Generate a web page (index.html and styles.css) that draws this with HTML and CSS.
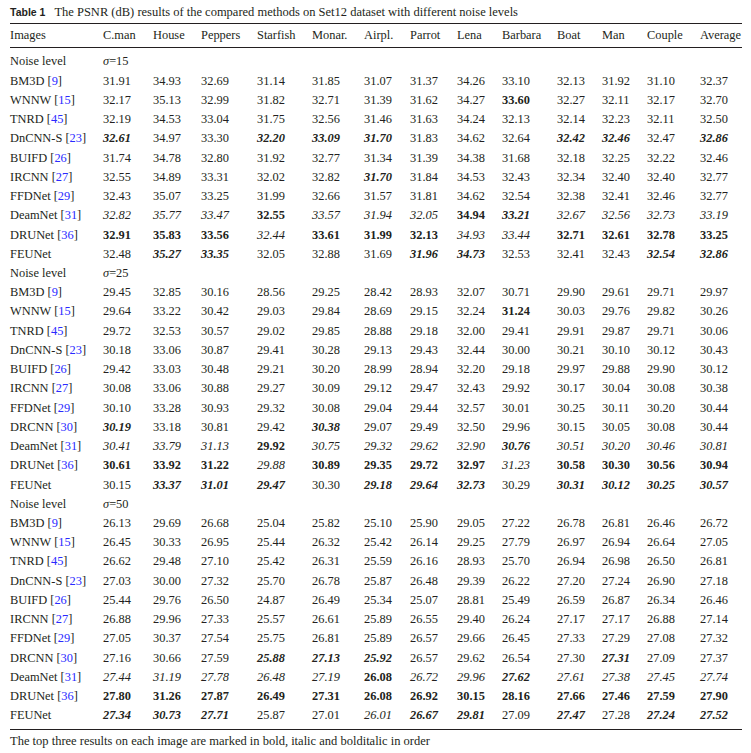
FILE: index.html
```html
<!DOCTYPE html>
<html>
<head>
<meta charset="utf-8">
<link rel="stylesheet" href="styles.css">
</head>
<body>
<div class="wrap">
  <div class="caption"><span class="label">Table 1</span><span class="ctext">The PSNR (dB) results of the compared methods on Set12 dataset with different noise levels</span></div>
  <table class="results">
    <colgroup>
      <col class="c-img"><col class="c-cman"><col class="c-house"><col class="c-pep"><col class="c-star"><col class="c-mon"><col class="c-air"><col class="c-par"><col class="c-lena"><col class="c-bar"><col class="c-boat"><col class="c-man"><col class="c-cou"><col class="c-avg">
    </colgroup>
    <thead>
      <tr><th>Images</th><th>C.man</th><th>House</th><th>Peppers</th><th>Starfish</th><th>Monar.</th><th>Airpl.</th><th>Parrot</th><th>Lena</th><th>Barbara</th><th>Boat</th><th>Man</th><th>Couple</th><th>Average</th></tr>
    </thead>
    <tbody>
      <tr class="first"><td>Noise level</td><td colspan="13"><i>σ</i>=15</td></tr>
      <tr><td>BM3D [<span class="ref">9</span>]</td><td>31.91</td><td>34.93</td><td>32.69</td><td>31.14</td><td>31.85</td><td>31.07</td><td>31.37</td><td>34.26</td><td>33.10</td><td>32.13</td><td>31.92</td><td>31.10</td><td>32.37</td></tr>
      <tr><td>WNNW [<span class="ref">15</span>]</td><td>32.17</td><td>35.13</td><td>32.99</td><td>31.82</td><td>32.71</td><td>31.39</td><td>31.62</td><td>34.27</td><td class="b">33.60</td><td>32.27</td><td>32.11</td><td>32.17</td><td>32.70</td></tr>
      <tr><td>TNRD [<span class="ref">45</span>]</td><td>32.19</td><td>34.53</td><td>33.04</td><td>31.75</td><td>32.56</td><td>31.46</td><td>31.63</td><td>34.24</td><td>32.13</td><td>32.14</td><td>32.23</td><td>32.11</td><td>32.50</td></tr>
      <tr><td>DnCNN-S [<span class="ref">23</span>]</td><td class="bi">32.61</td><td>34.97</td><td>33.30</td><td class="bi">32.20</td><td class="bi">33.09</td><td class="bi">31.70</td><td>31.83</td><td>34.62</td><td>32.64</td><td class="bi">32.42</td><td class="bi">32.46</td><td>32.47</td><td class="bi">32.86</td></tr>
      <tr><td>BUIFD [<span class="ref">26</span>]</td><td>31.74</td><td>34.78</td><td>32.80</td><td>31.92</td><td>32.77</td><td>31.34</td><td>31.39</td><td>34.38</td><td>31.68</td><td>32.18</td><td>32.25</td><td>32.22</td><td>32.46</td></tr>
      <tr><td>IRCNN [<span class="ref">27</span>]</td><td>32.55</td><td>34.89</td><td>33.31</td><td>32.02</td><td>32.82</td><td class="bi">31.70</td><td>31.84</td><td>34.53</td><td>32.43</td><td>32.34</td><td>32.40</td><td>32.40</td><td>32.77</td></tr>
      <tr><td>FFDNet [<span class="ref">29</span>]</td><td>32.43</td><td>35.07</td><td>33.25</td><td>31.99</td><td>32.66</td><td>31.57</td><td>31.81</td><td>34.62</td><td>32.54</td><td>32.38</td><td>32.41</td><td>32.46</td><td>32.77</td></tr>
      <tr><td>DeamNet [<span class="ref">31</span>]</td><td class="i">32.82</td><td class="i">35.77</td><td class="i">33.47</td><td class="b">32.55</td><td class="i">33.57</td><td class="i">31.94</td><td class="i">32.05</td><td class="b">34.94</td><td class="bi">33.21</td><td class="i">32.67</td><td class="i">32.56</td><td class="i">32.73</td><td class="i">33.19</td></tr>
      <tr><td>DRUNet [<span class="ref">36</span>]</td><td class="b">32.91</td><td class="b">35.83</td><td class="b">33.56</td><td class="i">32.44</td><td class="b">33.61</td><td class="b">31.99</td><td class="b">32.13</td><td class="i">34.93</td><td class="i">33.44</td><td class="b">32.71</td><td class="b">32.61</td><td class="b">32.78</td><td class="b">33.25</td></tr>
      <tr><td>FEUNet</td><td>32.48</td><td class="bi">35.27</td><td class="bi">33.35</td><td>32.05</td><td>32.88</td><td>31.69</td><td class="bi">31.96</td><td class="bi">34.73</td><td>32.53</td><td>32.41</td><td>32.43</td><td class="bi">32.54</td><td class="bi">32.86</td></tr>

      <tr><td>Noise level</td><td colspan="13"><i>σ</i>=25</td></tr>
      <tr><td>BM3D [<span class="ref">9</span>]</td><td>29.45</td><td>32.85</td><td>30.16</td><td>28.56</td><td>29.25</td><td>28.42</td><td>28.93</td><td>32.07</td><td>30.71</td><td>29.90</td><td>29.61</td><td>29.71</td><td>29.97</td></tr>
      <tr><td>WNNW [<span class="ref">15</span>]</td><td>29.64</td><td>33.22</td><td>30.42</td><td>29.03</td><td>29.84</td><td>28.69</td><td>29.15</td><td>32.24</td><td class="b">31.24</td><td>30.03</td><td>29.76</td><td>29.82</td><td>30.26</td></tr>
      <tr><td>TNRD [<span class="ref">45</span>]</td><td>29.72</td><td>32.53</td><td>30.57</td><td>29.02</td><td>29.85</td><td>28.88</td><td>29.18</td><td>32.00</td><td>29.41</td><td>29.91</td><td>29.87</td><td>29.71</td><td>30.06</td></tr>
      <tr><td>DnCNN-S [<span class="ref">23</span>]</td><td>30.18</td><td>33.06</td><td>30.87</td><td>29.41</td><td>30.28</td><td>29.13</td><td>29.43</td><td>32.44</td><td>30.00</td><td>30.21</td><td>30.10</td><td>30.12</td><td>30.43</td></tr>
      <tr><td>BUIFD [<span class="ref">26</span>]</td><td>29.42</td><td>33.03</td><td>30.48</td><td>29.21</td><td>30.20</td><td>28.99</td><td>28.94</td><td>32.20</td><td>29.18</td><td>29.97</td><td>29.88</td><td>29.90</td><td>30.12</td></tr>
      <tr><td>IRCNN [<span class="ref">27</span>]</td><td>30.08</td><td>33.06</td><td>30.88</td><td>29.27</td><td>30.09</td><td>29.12</td><td>29.47</td><td>32.43</td><td>29.92</td><td>30.17</td><td>30.04</td><td>30.08</td><td>30.38</td></tr>
      <tr><td>FFDNet [<span class="ref">29</span>]</td><td>30.10</td><td>33.28</td><td>30.93</td><td>29.32</td><td>30.08</td><td>29.04</td><td>29.44</td><td>32.57</td><td>30.01</td><td>30.25</td><td>30.11</td><td>30.20</td><td>30.44</td></tr>
      <tr><td>DRCNN [<span class="ref">30</span>]</td><td class="bi">30.19</td><td>33.18</td><td>30.81</td><td>29.42</td><td class="bi">30.38</td><td>29.07</td><td>29.49</td><td>32.50</td><td>29.96</td><td>30.15</td><td>30.05</td><td>30.08</td><td>30.44</td></tr>
      <tr><td>DeamNet [<span class="ref">31</span>]</td><td class="i">30.41</td><td class="i">33.79</td><td class="i">31.13</td><td class="b">29.92</td><td class="i">30.75</td><td class="i">29.32</td><td class="i">29.62</td><td class="i">32.90</td><td class="bi">30.76</td><td class="i">30.51</td><td class="i">30.20</td><td class="i">30.46</td><td class="i">30.81</td></tr>
      <tr><td>DRUNet [<span class="ref">36</span>]</td><td class="b">30.61</td><td class="b">33.92</td><td class="b">31.22</td><td class="i">29.88</td><td class="b">30.89</td><td class="b">29.35</td><td class="b">29.72</td><td class="b">32.97</td><td class="i">31.23</td><td class="b">30.58</td><td class="b">30.30</td><td class="b">30.56</td><td class="b">30.94</td></tr>
      <tr><td>FEUNet</td><td>30.15</td><td class="bi">33.37</td><td class="bi">31.01</td><td class="bi">29.47</td><td>30.30</td><td class="bi">29.18</td><td class="bi">29.64</td><td class="bi">32.73</td><td>30.29</td><td class="bi">30.31</td><td class="bi">30.12</td><td class="bi">30.25</td><td class="bi">30.57</td></tr>

      <tr><td>Noise level</td><td colspan="13"><i>σ</i>=50</td></tr>
      <tr><td>BM3D [<span class="ref">9</span>]</td><td>26.13</td><td>29.69</td><td>26.68</td><td>25.04</td><td>25.82</td><td>25.10</td><td>25.90</td><td>29.05</td><td>27.22</td><td>26.78</td><td>26.81</td><td>26.46</td><td>26.72</td></tr>
      <tr><td>WNNW [<span class="ref">15</span>]</td><td>26.45</td><td>30.33</td><td>26.95</td><td>25.44</td><td>26.32</td><td>25.42</td><td>26.14</td><td>29.25</td><td>27.79</td><td>26.97</td><td>26.94</td><td>26.64</td><td>27.05</td></tr>
      <tr><td>TNRD [<span class="ref">45</span>]</td><td>26.62</td><td>29.48</td><td>27.10</td><td>25.42</td><td>26.31</td><td>25.59</td><td>26.16</td><td>28.93</td><td>25.70</td><td>26.94</td><td>26.98</td><td>26.50</td><td>26.81</td></tr>
      <tr><td>DnCNN-S [<span class="ref">23</span>]</td><td>27.03</td><td>30.00</td><td>27.32</td><td>25.70</td><td>26.78</td><td>25.87</td><td>26.48</td><td>29.39</td><td>26.22</td><td>27.20</td><td>27.24</td><td>26.90</td><td>27.18</td></tr>
      <tr><td>BUIFD [<span class="ref">26</span>]</td><td>25.44</td><td>29.76</td><td>26.50</td><td>24.87</td><td>26.49</td><td>25.34</td><td>25.07</td><td>28.81</td><td>25.49</td><td>26.59</td><td>26.87</td><td>26.34</td><td>26.46</td></tr>
      <tr><td>IRCNN [<span class="ref">27</span>]</td><td>26.88</td><td>29.96</td><td>27.33</td><td>25.57</td><td>26.61</td><td>25.89</td><td>26.55</td><td>29.40</td><td>26.24</td><td>27.17</td><td>27.17</td><td>26.88</td><td>27.14</td></tr>
      <tr><td>FFDNet [<span class="ref">29</span>]</td><td>27.05</td><td>30.37</td><td>27.54</td><td>25.75</td><td>26.81</td><td>25.89</td><td>26.57</td><td>29.66</td><td>26.45</td><td>27.33</td><td>27.29</td><td>27.08</td><td>27.32</td></tr>
      <tr><td>DRCNN [<span class="ref">30</span>]</td><td>27.16</td><td>30.66</td><td>27.59</td><td class="bi">25.88</td><td class="bi">27.13</td><td class="bi">25.92</td><td>26.57</td><td>29.62</td><td>26.54</td><td>27.30</td><td class="bi">27.31</td><td>27.09</td><td>27.37</td></tr>
      <tr><td>DeamNet [<span class="ref">31</span>]</td><td class="i">27.44</td><td class="i">31.19</td><td class="i">27.78</td><td class="i">26.48</td><td class="i">27.19</td><td class="b">26.08</td><td class="i">26.72</td><td class="i">29.96</td><td class="bi">27.62</td><td class="i">27.61</td><td class="i">27.38</td><td class="i">27.45</td><td class="i">27.74</td></tr>
      <tr><td>DRUNet [<span class="ref">36</span>]</td><td class="b">27.80</td><td class="b">31.26</td><td class="b">27.87</td><td class="b">26.49</td><td class="b">27.31</td><td class="b">26.08</td><td class="b">26.92</td><td class="b">30.15</td><td class="b">28.16</td><td class="b">27.66</td><td class="b">27.46</td><td class="b">27.59</td><td class="b">27.90</td></tr>
      <tr class="last"><td>FEUNet</td><td class="bi">27.34</td><td class="bi">30.73</td><td class="bi">27.71</td><td>25.87</td><td>27.01</td><td class="i">26.01</td><td class="bi">26.67</td><td class="bi">29.81</td><td>27.09</td><td class="bi">27.47</td><td>27.28</td><td class="bi">27.24</td><td class="bi">27.52</td></tr>
    </tbody>
  </table>
  <div class="note">The top three results on each image are marked in bold, italic and bolditalic in order</div>
</div>
</body>
</html>
```

FILE: styles.css
```css
html, body {
  margin: 0;
  padding: 0;
  background: #ffffff;
}

body {
  font-family: "Liberation Serif", "Times New Roman", serif;
  font-size: 12.4px;
  color: #231f20;
}

.wrap {
  width: 732px;
  padding: 4px 9px 0 10px;
}

.caption {
  height: 16px;
  line-height: 16px;
  white-space: nowrap;
  margin-bottom: 3px;
}

.caption .label {
  font-family: "Liberation Sans", Arial, sans-serif;
  font-weight: bold;
  font-size: 10.5px;
  margin-right: 9px;
}

.caption .ctext {
  font-size: 12.5px;
}

.results {
  width: 732px;
  table-layout: fixed;
  border-collapse: collapse;
  border-spacing: 0;
  border-top: 1px solid #231f20;
  border-bottom: 1px solid #231f20;
}

.c-img { width: 93px; }
.c-cman { width: 50px; }
.c-house { width: 48px; }
.c-pep { width: 56px; }
.c-star { width: 55px; }
.c-mon { width: 52px; }
.c-air { width: 46px; }
.c-par { width: 47px; }
.c-lena { width: 45px; }
.c-bar { width: 55px; }
.c-boat { width: 45px; }
.c-man { width: 45px; }
.c-cou { width: 53px; }
.c-avg { width: 42px; }

.results th,
.results td {
  padding: 0;
  text-align: left;
  white-space: nowrap;
  font-weight: normal;
  font-style: normal;
  vertical-align: bottom;
}

.results thead th {
  height: 23px;
  line-height: 23px;
  border-bottom: 1px solid #231f20;
  vertical-align: middle;
}

.results tbody td {
  height: 19.24px;
  line-height: 19.24px;
}

.results tbody tr.first td {
  padding-top: 4.4px;
}

.results tbody tr.last td {
  padding-bottom: 3px;
}

.results .b { font-weight: bold; }
.results .i { font-style: italic; }
.results .bi { font-weight: bold; font-style: italic; }

.ref {
  color: #2a2aff;
}

.note {
  margin-top: 3px;
  height: 16px;
  line-height: 16px;
  font-size: 12.5px;
  white-space: nowrap;
}
```
